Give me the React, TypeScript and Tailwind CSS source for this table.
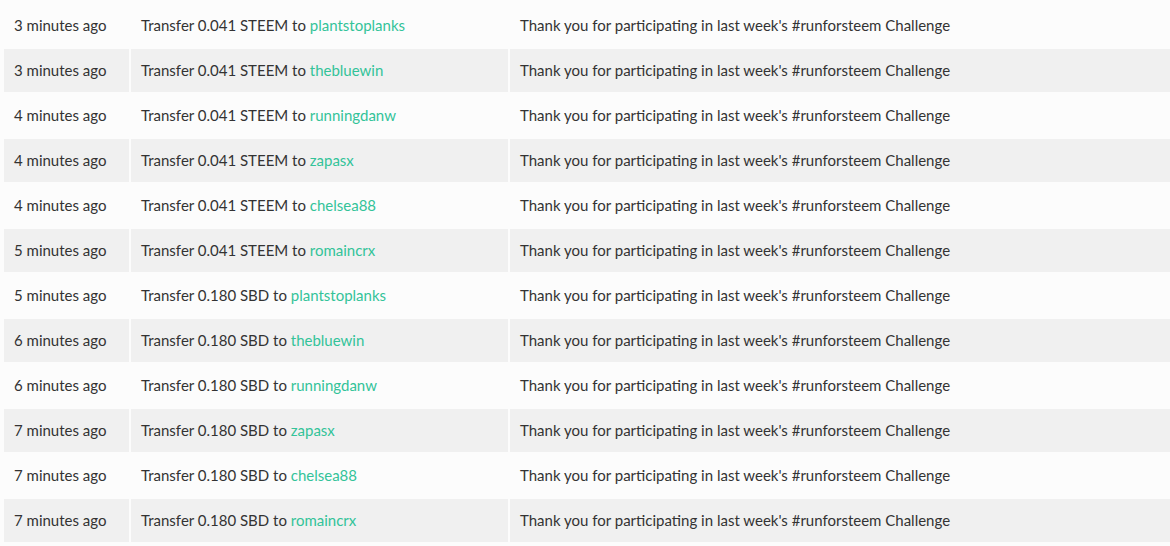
const rows: [string, string, string][] = [
  ["3 minutes ago", "0.041 STEEM", "plantstoplanks"],
  ["3 minutes ago", "0.041 STEEM", "thebluewin"],
  ["4 minutes ago", "0.041 STEEM", "runningdanw"],
  ["4 minutes ago", "0.041 STEEM", "zapasx"],
  ["4 minutes ago", "0.041 STEEM", "chelsea88"],
  ["5 minutes ago", "0.041 STEEM", "romaincrx"],
  ["5 minutes ago", "0.180 SBD", "plantstoplanks"],
  ["6 minutes ago", "0.180 SBD", "thebluewin"],
  ["6 minutes ago", "0.180 SBD", "runningdanw"],
  ["7 minutes ago", "0.180 SBD", "zapasx"],
  ["7 minutes ago", "0.180 SBD", "chelsea88"],
  ["7 minutes ago", "0.180 SBD", "romaincrx"],
];

export default function App() {
  return (
    <div className="h-[546px] overflow-hidden bg-[#fcfcfc] pl-[2px] pt-[2px] font-['Lato',sans-serif] text-[15px] text-[#333]">
      <table className="w-[1172px] table-fixed border-separate border-spacing-[2px]">
        <colgroup>
          <col className="w-[125px]" />
          <col className="w-[377px]" />
          <col />
        </colgroup>
        <tbody>
          {rows.map(([time, amount, to], i) => (
            <tr key={i} className={i % 2 === 1 ? "bg-[#f0f0f0]" : ""}>
              <td className="h-[43px] px-[10px] align-middle">{time}</td>
              <td className="h-[43px] px-[10px] align-middle">
                Transfer {amount} to{" "}
                <a href="#" className="text-[#33c399]">
                  {to}
                </a>
              </td>
              <td className="h-[43px] px-[10px] align-middle">
                Thank you for participating in last week's #runforsteem Challenge
              </td>
            </tr>
          ))}
        </tbody>
      </table>
    </div>
  );
}
